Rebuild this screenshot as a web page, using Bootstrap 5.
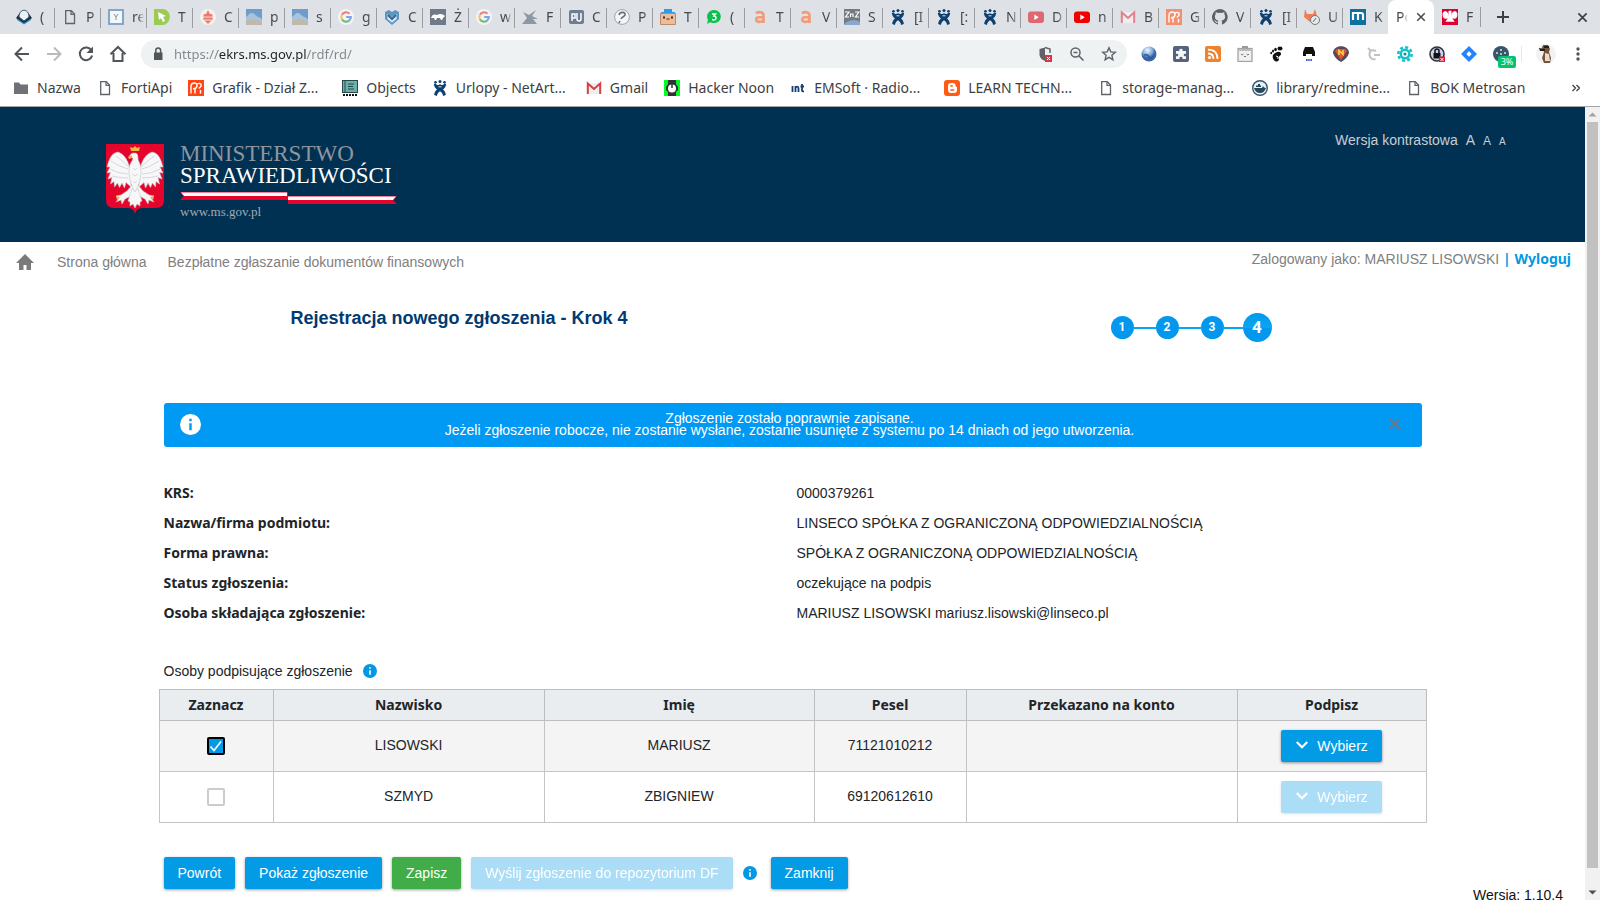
<!DOCTYPE html>
<html lang="pl">
<head>
<meta charset="utf-8">
<meta name="viewport" content="width=device-width, initial-scale=1">
<title>Podpisywanie zgłoszenia</title>
<link href="https://cdn.jsdelivr.net/npm/bootstrap@5.3.0/dist/css/bootstrap.min.css" rel="stylesheet">
<style>
  body { font-family: "Liberation Sans", Arial, sans-serif; font-size: 14px; line-height: 20px; color: #212529; background: #fff; }
  a { text-decoration: none; }
  b, th, .strong { font-family: "Noto Sans", "Open Sans", sans-serif; font-weight: 700; }

  /* browser chrome */
  .chrome { font-family: "Noto Sans", sans-serif; color: #3c4043; }
  .tabstrip { height: 34px; background: #dee1e6; padding-left: 8px; }
  .tab { flex: 0 0 46px; height: 34px; gap: 8px; padding: 0 2px 0 8px; color: #45494d; position: relative; }
  .tab + .tab::before { content: ""; position: absolute; left: 0; top: 8px; width: 1px; height: 20px; background: #9a9da1; }
  .tab.active::before, .tab.active + .tab::before { display: none; }
  .tab svg { flex: none; }
  .tab span { width: 12px; overflow: hidden; white-space: nowrap; -webkit-mask-image: linear-gradient(90deg, #000 50%, transparent); mask-image: linear-gradient(90deg, #000 50%, transparent); }
  .tab.active { background: #fff; border-radius: 8px 8px 0 0; }
  .plain { border: 0; background: none; padding: 0; line-height: 0; color: inherit; }
  .last-tab { border-right: 1px solid #9a9da1; height: 20px; }
  .toolbar { height: 40px; padding: 0 14px 0 13px; gap: 14px; }
  .omnibox { height: 28px; border-radius: 14px; background: #eff2f3; padding: 0 10px 0 9px; }
  .omnibox input { border: 0; outline: 0; background: linear-gradient(90deg, #80868b 44px, #202124 44px, #202124 132px, #80868b 132px); -webkit-background-clip: text; background-clip: text; color: #202124; -webkit-text-fill-color: transparent; font-size: 13px; padding: 0; }
  .ext { gap: 16px; }
  .ext .vr { margin-left: -4px; color: #9a9da1; height: 16px; }
  .pct { position: absolute; left: 5px; top: 10px; width: 18px; background: #00c46e; color: #fff; font-size: 9px; line-height: 12px; border-radius: 2px; text-align: center; white-space: nowrap; }
  .bookmarks { height: 33px; gap: 16px; padding: 0 20px 4px 13px; border-bottom: 1px solid #a3a5a7; }
  .bookmarks a { gap: 8px; color: #3c4043; white-space: nowrap; }
  .bookmarks .cut { width: 114px; }

  /* scrollbar */
  .sbar { flex: 0 0 15px; background: #f1f1f1; }
  .thumb { background: #c1c1c1; width: 11px; margin-bottom: 17px; }

  /* page */
  .masthead { height: 135px; background: #003153; color: #c9cdd1; padding: 36px 5% 0 106px; }
  .brand { font-family: "Liberation Serif", serif; font-size: 23px; line-height: 22px; color: #fff; gap: 16px; }
  .brand .ribbon { margin-top: 4px; }
  .brand .dim { color: #8f959d; }
  .brand .site { font-size: 13px; line-height: 16px; color: #a3a9b0; }
  .contrast { gap: 8px; margin-top: -13px; }
  .contrast a { color: #c9cdd1; }
  .f12 { font-size: 12px; } .f10 { font-size: 10px; }
  .subnav { height: 40px; padding: 7px 14px 0 14px; color: #808080; }
  .subnav nav { gap: 21px; padding-top: 3px; }
  .subnav nav a { color: #808080; }
  .accent { color: #0398e5; }
  .wrap { width: 80%; }
  .inset { padding: 0 5px; }
  .title-row { margin: 24px 0 61px; padding: 0 155px 0 132px; }
  h1 { font-size: 18px; line-height: 24px; font-weight: 700; color: #003a70; margin: 0; }
  .steps { padding-top: 7px; }
  .step { width: 23px; height: 23px; border-radius: 50%; background: #0398ee; color: #fff; font: 700 12px/23px Roboto, sans-serif; text-align: center; }
  .step.now { width: 29px; height: 29px; line-height: 29px; font-size: 17px; background: linear-gradient(#0398ee, #08a6f2 50%, #0398ee 52%); }
  .link { width: 22px; height: 2px; background: #08a6ee; }
  .link.short { width: 19px; }
  .notice { background: #0099f4; border: 0; border-radius: 3px; color: #fff; height: 44px; padding: 0 11px 2px 16px; margin: 0 0 31px; line-height: 12px; }
  .notice button { width: 32px; }
  .facts dt, .facts dd { margin: 0; line-height: 30px; padding: 0 4px; }
  .facts dt { padding-left: 5px; }
  .signers { margin-top: 31px; line-height: 24px; gap: 10px; }
  .people { margin: 6px 0 34px; text-align: center; border: 1px solid #bdbdbd; table-layout: fixed; color: inherit; }
  .people th, .people td { border: 1px solid #c4c4c4; padding: 0; vertical-align: middle; color: inherit; }
  .people th { background: #e9edf0; height: 31px; line-height: 20px; border-color: #bdbdbd; }
  .people td { height: 51px; padding-bottom: 2px; }
  .people td:last-child { padding-bottom: 0; }
  .people .picked td { background: #f4f4f4; }
  .people .form-check-input { width: 18px; height: 18px; margin: 0; border: 2px solid #ccc; border-radius: 2px; display: inline-block; vertical-align: middle; background-color: #fff; }
  .people .form-check-input:checked { background-color: #0099e8; border-color: #000; background-size: 14px 14px; background-image: url("data:image/svg+xml,%3csvg xmlns='http://www.w3.org/2000/svg' viewBox='0 0 14 14'%3e%3cpath d='M1.500 7.500l3.500 4 7-9' fill='none' stroke='%23fff' stroke-width='1.700'/%3e%3c/svg%3e"); }
  .act { height: 32px; padding: 0 14px; font-size: 14px; line-height: 20px; border: 0; border-radius: 2px; color: #fff; background: #039be5; box-shadow: 0 1px 3px rgba(0,0,0,.4); }
  .act svg { vertical-align: 1px; }
  .act.save { background: #41ad49; }
  .act:disabled { color: #fff; background: #039be5; opacity: .33; }
  .actions { gap: 10px; }
  .version { line-height: 12px; padding-right: 22px; color: #111; }
</style>
</head>
<body class="vh-100 overflow-hidden d-flex flex-column">

<svg width="0" height="0" class="position-absolute" aria-hidden="true">
  <defs>
    <symbol id="page" viewBox="0 0 16 16"><path d="M3.7 1.7h5.6l3.2 3.3v9.5H3.700z" fill="none" stroke="#5f6368" stroke-width="1.3"/><path d="M9 2v3.300h3.500" fill="none" stroke="#5f6368" stroke-width="1.200"/></symbol>
    <symbol id="google" viewBox="0 0 16 16"><circle cx="8" cy="8" r="8" fill="#f3f4f6"/><g fill="none" stroke-width="2.200"><path d="M11.500 4.700A4.800 4.800 0 0 0 3.900 5.700" stroke="#ee8078"/><path d="M3.900 5.700a4.800 4.800 0 0 0 0 4.600" stroke="#f7c95c"/><path d="M3.900 10.300a4.800 4.800 0 0 0 7.200 1.300" stroke="#72bb86"/><path d="M11.100 11.600A4.600 4.600 0 0 0 12.800 8H8.200" stroke="#7ba6ef"/></g></symbol>
    <symbol id="jira" viewBox="0 0 16 16"><g fill="#0b4070"><circle cx="3.500" cy="2.300" r="1.300"/><circle cx="8" cy="1.500" r="1.500"/><circle cx="12.500" cy="2.300" r="1.300"/><path d="M1.800 4l1.700-.5C5 5.500 6.500 5.500 8 4.300c1.500 1.200 3 1.200 4.500-.8l1.700.5c-.5 2.800-1.700 4.500-3.200 5.500 1.500 1.300 2.700 3 2.800 5.500L11 16c0-2-1-3.500-3-4.800C6 12.500 5 14 5 16l-2.800-1c.1-2.500 1.300-4.200 2.800-5.500C3.500 8.500 2.300 6.800 1.800 4z"/></g><path d="M6.500 6.800h3" stroke="#dfe5ec"/></symbol>
    <symbol id="sky" viewBox="0 0 16 16"><rect width="16" height="16" fill="#6f9dca"/><path d="M0 8c3-2 3-4 6-4 2 0 4 3 6 4 2 0 3 1 4 3v5H0z" fill="#a9c3da"/><path d="M0 12c5-2 10-2 16 1v3H0z" fill="#c0b8a8"/></symbol>
    <symbol id="hand" viewBox="0 0 16 16"><rect width="16" height="16" fill="currentColor"/><path d="M3 13.500V6.500C3 2 9 2 9 5.500c0 2.500-2 3.200-4 3.200M7 13.500V9M8.500 5C10 2.500 14 3 13 6c-.5 1.500-1.500 1.500-2 2.500M12.500 13.500V10" fill="none" stroke="#fff" stroke-width="1.400"/></symbol>
    <symbol id="play" viewBox="0 0 16 16"><rect y="2.500" width="16" height="11.500" rx="3" fill="currentColor"/><path d="M6.300 5.500v5.500l4.500-2.700z" fill="#fff"/></symbol>
    <symbol id="mail" viewBox="0 0 16 16"><path d="M1 3h14v11H1z" fill="#eceef0"/><path d="M1.800 14V3.500L8 9l6.200-5.500V14" fill="none" stroke="currentColor" stroke-width="2"/></symbol>
    <symbol id="lettera" viewBox="0 0 16 16"><path d="M4 4.300C6.500 2.500 11.500 2.500 11.500 6.500V14M11.500 8.200H7c-4 .3-3.500 5 .2 4.700 2.500 0 4.300-1.200 4.300-3.200" fill="none" stroke="#f49a76" stroke-width="2.600"/></symbol>
    <symbol id="info" viewBox="0 0 24 24"><path fill="currentColor" d="M12 0a12 12 0 1 0 0 24 12 12 0 0 0 0-24zm-1.400 5.500h2.800v2.800h-2.800zm0 5h2.800v8h-2.800z"/></symbol>
    <symbol id="cross" viewBox="0 0 12 12"><path d="M1.500 1.500l9 9m0-9l-9 9" fill="none" stroke="currentColor" stroke-width="1.800"/></symbol>
    <symbol id="chev" viewBox="0 0 12 8"><path d="M1.500 1.500L6 6l4.500-4.500" fill="none" stroke="currentColor" stroke-width="1.800"/></symbol>
    <symbol id="wing" viewBox="0 0 58 70"><path d="M25 36C25 24 21 12 12 9 5 10 3 17 1 24l3 0-3 6 3.500-.5L2 36l4-1.500L4.500 41 8 38.500 8.500 44l3-4 2 4.500L16 40l2.500 5 1.500-5.500L25 44z"/></symbol>
  </defs>
</svg>

<header class="chrome flex-shrink-0">
  <div class="tabstrip d-flex align-items-center" role="tablist">
    <div class="tab d-flex align-items-center"><svg width="16" height="16" viewBox="0 0 16 16"><path d="M0 9l3-4h10l3 4-8 6z" fill="#1d2f3c"/><path d="M3 8c0-9 10-9 10 0l-5 4z" fill="#e8f4fa" stroke="#3b5563"/><path d="M1 9.500l7 4.500 7-4.500v1.500l-7 4.500-7-4.500z" fill="#2c93c9"/></svg><span>(</span></div>
    <div class="tab d-flex align-items-center"><svg width="16" height="16"><use href="#page"/></svg><span>P</span></div>
    <div class="tab d-flex align-items-center"><svg width="16" height="16" viewBox="0 0 16 16"><rect x="1" y="1" width="14" height="14" fill="#f4f7fa" stroke="#85a6cc" stroke-width="2"/><path d="M6 5l2 3 2-3M8 8v3" fill="none" stroke="#8a8f94"/></svg><span>re</span></div>
    <div class="tab d-flex align-items-center"><svg width="16" height="16" viewBox="0 0 16 16"><path d="M0 0h9c9 1 9 14 0 16H0z" fill="#9bcb52"/><path d="M4 3l8 4-3 1 2 4-2 1-2-4-2 2z" fill="#fff"/></svg><span>T</span></div>
    <div class="tab d-flex align-items-center"><svg width="16" height="16" viewBox="0 0 16 16"><circle cx="8" cy="8" r="8" fill="#f6f1f1"/><path d="M8 1l2 4h2l1 3h-1l1 2-3 3-2 2-2-2-3-3 1-2H3l1-3h2z" fill="#ea7d6c"/><path d="M3 8h10M4 11h8" stroke="#fff" stroke-width=".7"/></svg><span>C</span></div>
    <div class="tab d-flex align-items-center"><svg width="16" height="16"><use href="#sky"/></svg><span>p</span></div>
    <div class="tab d-flex align-items-center"><svg width="16" height="16"><use href="#sky"/></svg><span>s</span></div>
    <div class="tab d-flex align-items-center"><svg width="16" height="16"><use href="#google"/></svg><span>g</span></div>
    <div class="tab d-flex align-items-center"><svg width="16" height="16" viewBox="0 0 16 16"><path d="M1 3l4-2 3 2 3-2 4 2v7l-7 6-7-6z" fill="#5c96c2"/><path d="M3.500 5l4.500 3 4.500-3v5L8 13.500 3.500 10z" fill="#e6eef5"/><path d="M4 6l4 4 4-4" fill="none" stroke="#36648e" stroke-width="2"/></svg><span>C</span></div>
    <div class="tab d-flex align-items-center"><svg width="16" height="16" viewBox="0 0 16 16"><rect width="16" height="16" fill="#6f7b88"/><path d="M1 9c1-4 4-4 6-3 3-2 6-1 8 1l-2 2-1 2h-1l-1-2H7l-1 2H5L4 9z" fill="#fff"/></svg><span>Ż</span></div>
    <div class="tab d-flex align-items-center"><svg width="16" height="16"><use href="#google"/></svg><span>w</span></div>
    <div class="tab d-flex align-items-center"><svg width="16" height="16" viewBox="0 0 16 16"><path d="M1 3l6 3 7-5-4 6 6 3-5 0 4 5H0l5-6z" fill="#8b98a5"/></svg><span>F</span></div>
    <div class="tab d-flex align-items-center"><svg width="16" height="16" viewBox="0 0 16 16"><rect x="1" y="1" width="15" height="14" rx="2" fill="#6f7c93"/><path d="M4 12V5h3v4H4M9 4v6q0 2 2 2t2-2V4" fill="none" stroke="#fff" stroke-width="1.500"/></svg><span>C</span></div>
    <div class="tab d-flex align-items-center"><svg width="16" height="16" viewBox="0 0 16 16"><circle cx="8" cy="8" r="7.400" fill="#f5f6f7" stroke="#a0a4a8"/><path d="M5 6c1-4 7-3 6 0-.5 1.500-3 1.500-4 4M6 12l-1 2" fill="none" stroke="#6c7074" stroke-width="1.600"/></svg><span>P</span></div>
    <div class="tab d-flex align-items-center"><svg width="16" height="16" viewBox="0 0 16 16"><path d="M4 0h8v3h3v1H1V3h3z" fill="#2b9bea"/><path d="M.5 4.500h15v11H.5z" fill="#eebc98" stroke="#b98b69"/><path d="M3 7.500h2v2H3zM11 7.500h2v2h-2zM6.500 9.500h3v1h-3z" fill="#2e2a28"/></svg><span>T</span></div>
    <div class="tab d-flex align-items-center"><svg width="16" height="16" viewBox="0 0 16 16"><path d="M1 15l1-4C-1 5 4 1 8 1c9 0 9 13 0 13-2 0-3-.3-4-.8z" fill="#09c14b"/><path d="M6 5h3.500L8 7c3 0 2.500 4-.3 4L6 10.500" fill="none" stroke="#fff" stroke-width="1.500"/></svg><span>(</span></div>
    <div class="tab d-flex align-items-center"><svg width="16" height="16"><use href="#lettera"/></svg><span>T</span></div>
    <div class="tab d-flex align-items-center"><svg width="16" height="16"><use href="#lettera"/></svg><span>V</span></div>
    <div class="tab d-flex align-items-center"><svg width="16" height="16" viewBox="0 0 16 16"><rect width="16" height="16" fill="#737b80"/><path d="M1 3h4L1.500 8H5M6.500 8V5h2.500v3M11 3h4l-3.500 5H15" fill="none" stroke="#fff" stroke-width="1.200"/><path d="M0 16c2-5 12-6 16-3v3z" fill="#86a9cc"/></svg><span>S</span></div>
    <div class="tab d-flex align-items-center"><svg width="16" height="16"><use href="#jira"/></svg><span>[I</span></div>
    <div class="tab d-flex align-items-center"><svg width="16" height="16"><use href="#jira"/></svg><span>[:</span></div>
    <div class="tab d-flex align-items-center"><svg width="16" height="16"><use href="#jira"/></svg><span>N</span></div>
    <div class="tab d-flex align-items-center"><svg width="16" height="16" color="#e06671"><use href="#play"/></svg><span>D</span></div>
    <div class="tab d-flex align-items-center"><svg width="16" height="16" color="#f00000"><use href="#play"/></svg><span>n</span></div>
    <div class="tab d-flex align-items-center"><svg width="16" height="16" color="#e3808a"><use href="#mail"/></svg><span>B</span></div>
    <div class="tab d-flex align-items-center"><svg width="16" height="16" color="#f49070"><use href="#hand"/></svg><span>G</span></div>
    <div class="tab d-flex align-items-center"><svg width="16" height="16" viewBox="0 0 16 16"><path fill="#5d6165" d="M8 0a8 8 0 0 0-2.500 15.600c.4.100.5-.2.500-.400v-1.500c-2.200.5-2.700-1-2.700-1-.4-1-.9-1.200-.9-1.200-.7-.5 0-.5 0-.5.800.1 1.200.8 1.200.8.700 1.300 1.900.9 2.400.7 0-.5.300-.9.500-1.100-1.800-.2-3.600-.9-3.600-4 0-.9.300-1.600.8-2.100 0-.2-.3-1 .1-2.100 0 0 .7-.2 2.200.8a7.500 7.500 0 0 1 4 0c1.500-1 2.200-.8 2.200-.8.4 1.100.1 1.900.1 2.100.5.500.8 1.200.8 2.100 0 3.100-1.900 3.800-3.700 4 .3.300.6.700.6 1.500v2.200c0 .2.100.5.500.4A8 8 0 0 0 8 0z"/></svg><span>V</span></div>
    <div class="tab d-flex align-items-center"><svg width="16" height="16"><use href="#jira"/></svg><span>[I</span></div>
    <div class="tab d-flex align-items-center"><svg width="16" height="16" viewBox="0 0 16 16"><path d="M1 0l2 5h6l2-5 2 7-7 6-6-5z" fill="#ef7d55"/><circle cx="11" cy="11" r="4.500" fill="#e8e9eb" stroke="#777"/><path d="M9 13l3-4" stroke="#666"/></svg><span>U</span></div>
    <div class="tab d-flex align-items-center"><svg width="16" height="16" viewBox="0 0 16 16"><rect width="16" height="16" fill="#0f6f9f"/><path d="M3 11V4h8q2 0 2 2v5M8 4v7" fill="none" stroke="#fff" stroke-width="2.200"/></svg><span>K</span></div>
    <div class="tab active d-flex align-items-center"><span>Po</span><button class="plain" aria-label="Zamknij kartę"><svg width="10" height="10"><use href="#cross"/></svg></button></div>
    <div class="tab d-flex align-items-center"><svg width="16" height="16" viewBox="0 0 58 70" preserveAspectRatio="none"><path fill="#dc0032" d="M0 0h58v70H0z"/><g fill="#fff"><use href="#wing" width="58" height="70"/><use href="#wing" width="58" height="70" transform="translate(58) scale(-1 1)"/><path d="M24 8h10l2 30 10 18H12l10-18z"/></g></svg><span>F</span></div>
    <div class="last-tab"></div>
    <button class="plain ms-3" aria-label="Nowa karta"><svg width="12" height="12" viewBox="0 0 12 12"><path d="M6 0v12M0 6h12" stroke="#3c4043" stroke-width="2"/></svg></button>
    <button class="plain ms-auto me-2 px-1" aria-label="Zamknij okno"><svg width="11" height="11"><use href="#cross"/></svg></button>
  </div>

  <div class="toolbar d-flex align-items-center">
    <button class="plain" aria-label="Wstecz"><svg width="18" height="18" viewBox="0 0 18 18"><path d="M16 9H3M9 2.500L2.500 9 9 15.500" fill="none" stroke="#50555a" stroke-width="2"/></svg></button>
    <button class="plain" aria-label="Dalej"><svg width="18" height="18" viewBox="0 0 18 18"><path d="M2 9h13M9 2.500L15.500 9 9 15.500" fill="none" stroke="#b8babd" stroke-width="2"/></svg></button>
    <button class="plain" aria-label="Odśwież"><svg width="18" height="18" viewBox="0 0 18 18"><path d="M14.500 5.500A6.300 6.300 0 1 0 15.200 10.500" fill="none" stroke="#50555a" stroke-width="2"/><path d="M16 1.500V8H9.500z" fill="#50555a"/></svg></button>
    <button class="plain" aria-label="Strona startowa"><svg width="18" height="18" viewBox="0 0 18 18"><path d="M1.500 9.300L9 2l7.500 7.300M4.500 8v8h9V8" fill="none" stroke="#50555a" stroke-width="2"/></svg></button>
    <div class="omnibox d-flex align-items-center flex-grow-1">
      <svg width="16" height="16" viewBox="0 0 16 16"><path d="M4 6.500h8.500V14H4z" fill="#50555a"/><path d="M5.800 7V4.500a2.400 2.400 0 0 1 4.800 0V7" fill="none" stroke="#50555a" stroke-width="1.500"/></svg>
      <input class="flex-grow-1 ms-2" type="text" value="https://ekrs.ms.gov.pl/rdf/rd/" aria-label="Adres">
      <button class="plain me-3" aria-label="Treści zablokowane"><svg width="16" height="16" viewBox="0 0 16 16"><path d="M8 1.500L2.500 3v5c0 4 3 6 5.500 7z" fill="#5f6368"/><path d="M8 1.500L13 3v4" fill="none" stroke="#5f6368" stroke-width="1.500"/><path d="M8 9h7v7H8z" fill="#dc3545"/><path d="M10 11l3 3m0-3l-3 3" stroke="#fff"/></svg></button>
      <button class="plain me-3" aria-label="Powiększenie"><svg width="16" height="16" viewBox="0 0 16 16"><circle cx="6.500" cy="6.500" r="4.500" fill="none" stroke="#5f6368" stroke-width="1.500"/><path d="M10 10l4.500 4.500M4.500 6.500h4" stroke="#5f6368" stroke-width="1.600"/></svg></button>
      <button class="plain" aria-label="Dodaj do zakładek"><svg width="16" height="16" viewBox="0 0 16 16"><path d="M8 1.800l1.800 4.100 4.500.4-3.400 3 1 4.400L8 11.400l-3.900 2.300 1-4.400-3.400-3 4.500-.4z" fill="none" stroke="#5f6368" stroke-width="1.400"/></svg></button>
    </div>
    <div class="ext d-flex align-items-center">
      <svg width="16" height="16" viewBox="0 0 16 16"><defs><radialGradient id="glb" cx=".4" cy=".25"><stop offset="0" stop-color="#f2f8fd"/><stop offset=".7" stop-color="#7ba7da"/><stop offset="1" stop-color="#3a64a3"/></radialGradient></defs><circle cx="8" cy="8" r="7.500" fill="url(#glb)"/><path d="M3 9q4-1 5 2t5-1" fill="none" stroke="#2f5c9c" stroke-width="1.500"/></svg>
      <svg width="16" height="16" viewBox="0 0 16 16"><rect width="16" height="16" rx="2" fill="#56647b"/><path d="M3 5h3.500c-1.500-3 4.500-3 3 0H13v3c-3-1.500-3 3.500 0 2v3H9.500c1-3-4-3-3 0H3v-3c3 1.500 3-3.500 0-2z" fill="#f4f5f7"/></svg>
      <svg width="16" height="16" viewBox="0 0 16 16"><rect width="16" height="16" rx="2" fill="#ee832f"/><circle cx="4.500" cy="11.500" r="1.600" fill="#fff"/><path d="M3 7.500q5.500 0 5.500 5.500M3 3.700q9.500 0 9.500 9.300" fill="none" stroke="#fff" stroke-width="1.800"/></svg>
      <svg width="16" height="16" viewBox="0 0 16 16"><path d="M5 0h6v3H5z" fill="#9a9a9a"/><rect x="1" y="2.500" width="14" height="13" fill="#f0f0f0" stroke="#a3a3a3" stroke-width="1.300"/><path d="M1 3h14v2H1z" fill="#bbb"/><path d="M4 8q1 2 2.500 0M9.500 8q1.500 2 2.500 0M7 10.500h2" fill="none" stroke="#777"/></svg>
      <svg width="16" height="16" viewBox="0 0 16 16"><g fill="#111"><ellipse cx="11" cy="2.500" rx="2.500" ry="2"/><ellipse cx="6.500" cy="3.500" rx="1.300" ry="1.800"/><ellipse cx="4" cy="5" rx="1" ry="1.600"/><ellipse cx="2.200" cy="7" rx=".9" ry="1.300"/><path d="M4 9c2-3 8-5 8-1 0 2-3 2-2 4 .5 2-1 4-3 3.500C5 15 3 12 4 9z"/></g><path d="M7 10q3 0 2 3" fill="none" stroke="#fff" stroke-width="1"/></svg>
      <svg width="16" height="16" viewBox="0 0 16 16"><path d="M4 1h8l2 5v4H2V6z" fill="#111"/><path d="M5 8h6v4H5z" fill="#fff"/><path d="M5 14h6" stroke="#3050d0" stroke-width="2" stroke-dasharray="1.500 .7"/></svg>
      <svg width="16" height="16" viewBox="0 0 16 16"><path d="M0 7C0-2 16-2 16 7q-2 6-8 9-6-3-8-9z" fill="#56485e"/><path d="M2 5l2-2h8l2 2-6 9z" fill="#e3562c"/><path d="M6 9V4.500l4 4V4" fill="none" stroke="#ffd34a" stroke-width="1.500"/></svg>
      <svg width="16" height="16" viewBox="0 0 16 16"><path d="M11 5C7 3 4 5 4.500 9c.5 3 3 5 6 4M9 9h6M3 2l3 3" fill="none" stroke="#c2c2c2" stroke-width="2"/></svg>
      <svg width="16" height="16" viewBox="0 0 16 16"><circle cx="8" cy="8" r="6.700" fill="none" stroke="#12c2c8" stroke-width="2.600" stroke-dasharray="3 2.250"/><circle cx="8" cy="8" r="5.500" fill="#19bfc6"/><circle cx="8" cy="8" r="3" fill="#fff"/><circle cx="8" cy="8" r="1.600" fill="#188d94"/></svg>
      <svg width="16" height="16" viewBox="0 0 16 16"><circle cx="8" cy="8" r="7" fill="#c8d4ee" stroke="#333" stroke-width="1.600"/><path d="M4.500 7h7v5.500h-7z" fill="#111"/><path d="M6 7V5a2 2 0 0 1 4 0v2" fill="none" stroke="#111" stroke-width="1.500"/><path d="M10 10.500h6V16h-6z" fill="#e4153c"/><path d="M11.500 12l3 3m0-3l-3 3" stroke="#fff"/></svg>
      <svg width="16" height="16" viewBox="0 0 16 16"><path d="M8 0l8 8-8 8-8-8z" fill="#2484ff"/><path d="M8 5.300L10.700 8 8 10.700 5.300 8z" fill="#fff"/></svg>
      <div class="position-relative lh-1"><svg width="16" height="16" viewBox="0 0 16 16"><circle cx="8" cy="8" r="8" fill="#3a5468"/><path d="M3 6h2v2H3zM7 3h2v2H7zM11 6h2v2h-2zM7 7h2v2H7z" fill="#9fc4da"/></svg><span class="pct">3%</span></div>
      <div class="vr"></div>
    </div>
    <svg width="20" height="20" viewBox="0 0 20 20"><circle cx="10" cy="10" r="10" fill="#f3f2f0"/><path d="M7 1h5l2 4-1 3 2 6-1 5H8l-2-5 2-6-2-4z" fill="#76533c"/><path d="M9 9l4 1 1 7H9z" fill="#e6dccd"/><path d="M3 4l6 1v2L4 7zM8 2h5v2H8z" fill="#2b1e17"/></svg>
    <button class="plain" aria-label="Menu"><svg width="16" height="16" viewBox="0 0 16 16"><g fill="#50555a"><circle cx="8" cy="3" r="1.700"/><circle cx="8" cy="8" r="1.700"/><circle cx="8" cy="13" r="1.700"/></g></svg></button>
  </div>

  <nav class="bookmarks d-flex align-items-center" aria-label="Zakładki">
    <a href="#" class="d-flex align-items-center"><svg width="16" height="16" viewBox="0 0 16 16"><path d="M1 2.500h5l1.500 2H15V14H1z" fill="#6e7276"/></svg>Nazwa</a>
    <a href="#" class="d-flex align-items-center"><svg width="16" height="16"><use href="#page"/></svg>FortiApi</a>
    <a href="#" class="d-flex align-items-center"><svg width="16" height="16" color="#ff4512"><use href="#hand"/></svg><span class="cut">Grafik - Dział Z...</span></a>
    <a href="#" class="d-flex align-items-center"><svg width="16" height="16" viewBox="0 0 16 16"><rect x=".5" y=".5" width="15" height="12" fill="#69b2ab" stroke="#26484a"/><path d="M3 0v13M6 4h6M6 6.500h5M6 9h6" stroke="#26484a"/><path d="M1 15h15" stroke="#111" stroke-width="2" stroke-dasharray="2 1"/></svg>Objects</a>
    <a href="#" class="d-flex align-items-center"><svg width="16" height="16"><use href="#jira"/></svg><span class="cut">Urlopy - NetArt...</span></a>
    <a href="#" class="d-flex align-items-center"><svg width="16" height="16" color="#d93f3c"><use href="#mail"/></svg>Gmail</a>
    <a href="#" class="d-flex align-items-center"><svg width="16" height="16" viewBox="0 0 16 16"><rect width="16" height="16" fill="#0f2"/><path d="M4 0h8v4l2 3v3l-2 2v4H4v-4l-2-2V7l2-3z" fill="#333"/><circle cx="8" cy="8.500" r="4" fill="#fff"/><path d="M8 4v4" stroke="#333" stroke-width="1.500"/></svg>Hacker Noon</a>
    <a href="#" class="d-flex align-items-center"><svg width="16" height="16" viewBox="0 0 16 16"><path d="M2.500 6v6M5.500 12V6M5.500 7.500q3-2 3 1V12M12 4v6.500q0 1 2 .8M10.500 6.500H14" fill="none" stroke="#143c78" stroke-width="1.800"/></svg><span class="cut">EMSoft · Radio...</span></a>
    <a href="#" class="d-flex align-items-center"><svg width="16" height="16" viewBox="0 0 16 16"><rect width="16" height="16" rx="3" fill="#ff5b12"/><path d="M4 6q0-3 3-3h2q2.500 0 2.500 2.500 0 1.500 1.500 1.500v3q0 3-3 3H7q-3 0-3-3z" fill="#fff"/><path d="M6.300 6h2.500M6.300 10h4" stroke="#ff5b12" stroke-width="1.400"/></svg><span class="cut">LEARN TECHN...</span></a>
    <a href="#" class="d-flex align-items-center"><svg width="16" height="16"><use href="#page"/></svg><span class="cut">storage-manag...</span></a>
    <a href="#" class="d-flex align-items-center"><svg width="16" height="16" viewBox="0 0 16 16"><circle cx="8" cy="8" r="7.300" fill="#e9eef1" stroke="#385668" stroke-width="1.400"/><path d="M2 8h8l1-2 1 1.500 2 .5c-1 3-3 5-6 5S3 11.500 2 8zM4 5.500h5V7H4zM6 4h2v1.500H6z" fill="#23475d"/></svg><span class="cut">library/redmine...</span></a>
    <a href="#" class="d-flex align-items-center"><svg width="16" height="16"><use href="#page"/></svg>BOK Metrosan</a>
    <button class="plain ms-auto" aria-label="Więcej zakładek"><svg width="8" height="8" viewBox="0 0 8 8"><path d="M.5 1l3 3-3 3M4.500 1l3 3-3 3" fill="none" stroke="#3c4043" stroke-width="1.300"/></svg></button>
  </nav>
</header>

<div class="d-flex flex-grow-1 overflow-hidden">
  <main class="flex-grow-1 overflow-hidden">
    <div class="masthead d-flex justify-content-between align-items-start">
      <a href="#" class="brand d-flex">
        <svg width="58" height="72" viewBox="0 0 58 72">
          <path d="M0 1h58v56q0 8-8 8H36q-6 0-7 6-1-6-7-6H8q-8 0-8-8z" fill="#e5052c"/>
          <g fill="#f7f7f8" stroke="#c3c4cb" stroke-width=".6">
            <use href="#wing" width="58" height="70"/>
            <use href="#wing" width="58" height="70" transform="translate(58) scale(-1 1)"/>
            <path d="M26 42l-5 6-6 4-5 1 3 2-3 4 5-2 1 4 3-5 6-3 4-5zM32 42l5 6 6 4 5 1-3 2 3 4-5-2-1 4-3-5-6-3-4-5z"/>
            <path d="M26 46l-4 12 2 1 0 4 3-2 2 4 2-4 3 2 0-4 2-1-4-12z"/>
            <path d="M28 10c-3 0-4 2-5 4l4 1c0 3-4 5-4 12 0 8 2 16 6 22 4-6 6-14 6-22 0-7-3-8-3-12s-1-5-4-5z"/>
          </g>
          <g fill="none" stroke="#c9cad2" stroke-width=".7"><path d="M5 18q9 6 17 8M4 26q9 5 18 5M6 33q8 2 16 2M10 13q8 6 13 11M53 18q-9 6-17 8M54 26q-9 5-18 5M52 33q-8 2-16 2M48 13q-8 6-13 11M27 25l2 2 2-2M26 31l3 2 3-2M27 38l2 2 2-2"/></g>
          <path d="M25 8l-1-4 3 1 2-2 2 2 3-1-1 4zM22 14l4-2v3l-3 1zM10 53l4 1-3 3zM48 53l-4 1 3 3z" fill="#f0b93c"/>
        </svg>
        <div class="d-flex flex-column">
          <span class="dim">MINISTERSTWO</span>
          <span>SPRAWIEDLIWOŚCI</span>
          <svg class="ribbon" width="217" height="13" viewBox="0 0 217 13"><path d="M0 1h108v8H0l4-4z" fill="#e5052c"/><path d="M1 1.500h106V5H4z" fill="#fff"/><path d="M108 5h109l-4 4 4 4H108z" fill="#e5052c"/><path d="M108 5.500h108L213 9H108z" fill="#fff"/></svg>
          <span class="site">www.ms.gov.pl</span>
        </div>
      </a>
      <div class="contrast d-flex align-items-baseline">
        <a href="#">Wersja kontrastowa</a><a href="#">A</a><a href="#" class="f12">A</a><a href="#" class="f10">A</a>
      </div>
    </div>

    <div class="subnav d-flex justify-content-between align-items-start">
      <nav class="d-flex align-items-center">
        <a href="#" aria-label="Start" class="lh-1"><svg width="22" height="20" viewBox="0 0 22 20"><path d="M11 2L2 11h3v7h4.500v-5h3v5H17v-7h3z" fill="#7a7a7a"/></svg></a>
        <a href="#">Strona główna</a>
        <a href="#">Bezpłatne zgłaszanie dokumentów finansowych</a>
      </nav>
      <div>Zalogowany jako: MARIUSZ LISOWSKI <b class="accent">| <a href="#" class="accent">Wyloguj</a></b></div>
    </div>

    <div class="wrap mx-auto">
      <div class="title-row d-flex justify-content-between align-items-start">
        <h1>Rejestracja nowego zgłoszenia - Krok 4</h1>
        <div class="steps d-flex align-items-center">
          <div class="step">1</div><div class="link"></div><div class="step">2</div><div class="link"></div><div class="step">3</div><div class="link short"></div><div class="step now">4</div>
        </div>
      </div>

      <div class="inset">
        <div class="notice alert d-flex align-items-center" role="alert">
          <svg width="21" height="21"><use href="#info"/></svg>
          <div class="flex-grow-1 text-center">Zgłoszenie zostało poprawnie zapisane.<br>Jeżeli zgłoszenie robocze, nie zostanie wysłane, zostanie usunięte z systemu po 14 dniach od jego utworzenia.</div>
          <button class="plain" aria-label="Zamknij komunikat"><svg width="14" height="14" color="#6b7b88"><use href="#cross"/></svg></button>
        </div>
      </div>

      <dl class="facts row g-0 mb-0">
        <dt class="col-6 strong">KRS:</dt><dd class="col-6">0000379261</dd>
        <dt class="col-6 strong">Nazwa/firma podmiotu:</dt><dd class="col-6">LINSECO SPÓŁKA Z OGRANICZONĄ ODPOWIEDZIALNOŚCIĄ</dd>
        <dt class="col-6 strong">Forma prawna:</dt><dd class="col-6">SPÓŁKA Z OGRANICZONĄ ODPOWIEDZIALNOŚCIĄ</dd>
        <dt class="col-6 strong">Status zgłoszenia:</dt><dd class="col-6">oczekujące na podpis</dd>
        <dt class="col-6 strong">Osoba składająca zgłoszenie:</dt><dd class="col-6">MARIUSZ LISOWSKI mariusz.lisowski@linseco.pl</dd>
      </dl>

      <div class="signers inset d-flex align-items-center">Osoby podpisujące zgłoszenie <svg class="accent" width="14" height="14"><use href="#info"/></svg></div>

      <table class="people table">
        <colgroup><col style="width:9%"><col style="width:21.400%"><col style="width:21.300%"><col style="width:12%"><col style="width:21.400%"><col style="width:14.900%"></colgroup>
        <thead><tr><th>Zaznacz</th><th>Nazwisko</th><th>Imię</th><th>Pesel</th><th>Przekazano na konto</th><th>Podpisz</th></tr></thead>
        <tbody>
          <tr class="picked">
            <td><input class="form-check-input" type="checkbox" checked aria-label="Zaznacz: LISOWSKI MARIUSZ"></td><td>LISOWSKI</td><td>MARIUSZ</td><td>71121010212</td><td></td>
            <td><button class="btn act"><svg class="me-2" width="14" height="10"><use href="#chev"/></svg>Wybierz</button></td>
          </tr>
          <tr>
            <td><input class="form-check-input" type="checkbox" aria-label="Zaznacz: SZMYD ZBIGNIEW"></td><td>SZMYD</td><td>ZBIGNIEW</td><td>69120612610</td><td></td>
            <td><button class="btn act" disabled><svg class="me-2" width="14" height="10"><use href="#chev"/></svg>Wybierz</button></td>
          </tr>
        </tbody>
      </table>

      <div class="actions inset d-flex align-items-center">
        <button class="btn act">Powrót</button>
        <button class="btn act">Pokaż zgłoszenie</button>
        <button class="btn act save">Zapisz</button>
        <button class="btn act" disabled>Wyślij zgłoszenie do repozytorium DF</button>
        <svg class="accent" width="14" height="14"><use href="#info"/></svg>
        <button class="btn act ms-1">Zamknij</button>
      </div>
    </div>
    <div class="version text-end">Wersja: 1.10.4</div>
  </main>

  <div class="sbar d-flex flex-column align-items-center" aria-hidden="true">
    <svg width="15" height="15" viewBox="0 0 15 15"><path d="M3.500 9.500h8l-4-4z" fill="#a3a3a3"/></svg>
    <div class="thumb flex-grow-1"></div>
    <svg width="15" height="15" viewBox="0 0 15 15"><path d="M3.500 5.500h8l-4 4z" fill="#505050"/></svg>
  </div>
</div>

<script src="https://cdn.jsdelivr.net/npm/bootstrap@5.3.0/dist/js/bootstrap.bundle.min.js"></script>
</body>
</html>
